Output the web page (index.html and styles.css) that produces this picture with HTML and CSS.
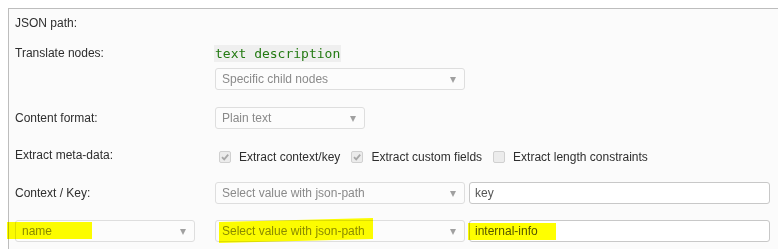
FILE: index.html
```html
<!DOCTYPE html>
<html>
<head>
<meta charset="utf-8">
<link rel="stylesheet" href="styles.css">
</head>
<body>
<div class="panel">
  <div class="row r1">
    <div class="label">JSON path:</div>
  </div>
  <div class="row r2">
    <div class="label tall">Translate nodes:</div>
    <div class="stack">
      <code class="code">text description</code>
      <div class="select w250">Specific child nodes<span class="arrow"></span></div>
    </div>
  </div>
  <div class="row r3">
    <div class="label">Content format:</div>
    <div class="select w150">Plain text<span class="arrow"></span></div>
  </div>
  <div class="row r4">
    <div class="label meta">Extract meta-data:</div>
    <div class="checks">
      <label class="check"><span class="box on"><svg viewBox="0 0 12 12" width="12" height="12"><path d="M3 6.2 L5.2 8.4 L9.2 3.6" fill="none" stroke="#a8a8a8" stroke-width="1.8"/></svg></span>Extract context/key</label>
      <label class="check"><span class="box on"><svg viewBox="0 0 12 12" width="12" height="12"><path d="M3 6.2 L5.2 8.4 L9.2 3.6" fill="none" stroke="#a8a8a8" stroke-width="1.8"/></svg></span>Extract custom fields</label>
      <label class="check"><span class="box"></span>Extract length constraints</label>
    </div>
  </div>
  <div class="row r5">
    <div class="label">Context / Key:</div>
    <div class="pair">
      <div class="select w250">Select value with json-path<span class="arrow"></span></div>
      <div class="input">key</div>
    </div>
  </div>
  <div class="row r6">
    <div class="select w180">name<span class="arrow"></span></div>
    <div class="pair">
      <div class="select w250">Select value with json-path<span class="arrow"></span></div>
      <div class="input">internal-info</div>
    </div>
  </div>
</div>
<div class="hl hl-name"></div>
<div class="hl hl-select"></div>
<div class="hl hl-info"></div>
</body>
</html>
```

FILE: styles.css
```css
html, body {
  margin: 0;
  padding: 0;
  background: #ffffff;
  overflow: hidden;
  height: 249px;
}
body {
  font-family: "Liberation Sans", Arial, sans-serif;
  font-size: 12px;
  color: #333333;
  position: relative;
}
.panel {
  margin: 8px 0 0 8px;
  border-top: 1px solid #bdbdbd;
  border-left: 1px solid #bdbdbd;
  background: #fbfbfb;
  height: 241px;
  padding: 7px 0 0 6px;
  box-sizing: border-box;
}
.row {
  display: grid;
  grid-template-columns: 200px 1fr;
  align-items: center;
}
.label {
  line-height: 14px;
  color: #2e2e2e;
}
.r1 { height: 14px; }
.r2 { margin-top: 15px; align-items: start; }
.label.tall { line-height: 17px; }
.stack {
  display: flex;
  flex-direction: column;
  align-items: flex-start;
  gap: 6px;
}
.code {
  font-family: "DejaVu Sans Mono", "Liberation Mono", monospace;
  font-size: 13px;
  line-height: 17px;
  height: 17px;
  color: #237a12;
  background: #efefef;
  padding: 0 1px;
  margin-left: -1px;
}
.select {
  position: relative;
  height: 22px;
  box-sizing: border-box;
  border: 1px solid #dedede;
  border-radius: 3px;
  background: #fcfcfc;
  color: #8a8a8a;
  line-height: 20px;
  padding-left: 6px;
}
.w250 { width: 250px; }
.w150 { width: 150px; }
.w180 { width: 180px; }
.arrow {
  position: absolute;
  right: 8px;
  top: 8px;
  width: 0;
  height: 0;
  border-left: 3.5px solid transparent;
  border-right: 3.5px solid transparent;
  border-top: 6px solid #a0a0a0;
}
.r3 { margin-top: 17px; }
.r4 { margin-top: 17px; align-items: start; height: 18px; }
.label.meta { padding-top: 2px; }
.checks {
  display: flex;
  align-items: center;
  margin-top: 4px;
  height: 14px;
}
.check {
  display: flex;
  align-items: center;
  line-height: 14px;
  color: #2e2e2e;
  margin-right: 7px;
}
.box {
  width: 12px;
  height: 12px;
  box-sizing: border-box;
  border: 1px solid #d0d0d0;
  border-radius: 2px;
  background: #ececec;
  margin: 0 8px 0 4px;
  display: flex;
  align-items: center;
  justify-content: center;
}
.box svg { display: block; margin: -1px; }
.r5 { margin-top: 18px; }
.r6 { margin-top: 16px; }
.pair {
  display: flex;
  gap: 4px;
  align-items: center;
}
.input {
  width: 301px;
  height: 22px;
  box-sizing: border-box;
  border: 1px solid #c8c8c8;
  border-radius: 3px;
  background: #ffffff;
  color: #555555;
  line-height: 20px;
  padding-left: 5px;
}
.hl {
  position: absolute;
  background: #ffff00;
  mix-blend-mode: multiply;
}
.hl-name {
  left: 7px;
  top: 222px;
  width: 85px;
  height: 17px;
}
.hl-select {
  left: 219px;
  top: 220px;
  width: 154px;
  height: 21px;
  transform: skewY(-1.4deg);
}
.hl-info {
  left: 468px;
  top: 223px;
  width: 88px;
  height: 17px;
}
```
